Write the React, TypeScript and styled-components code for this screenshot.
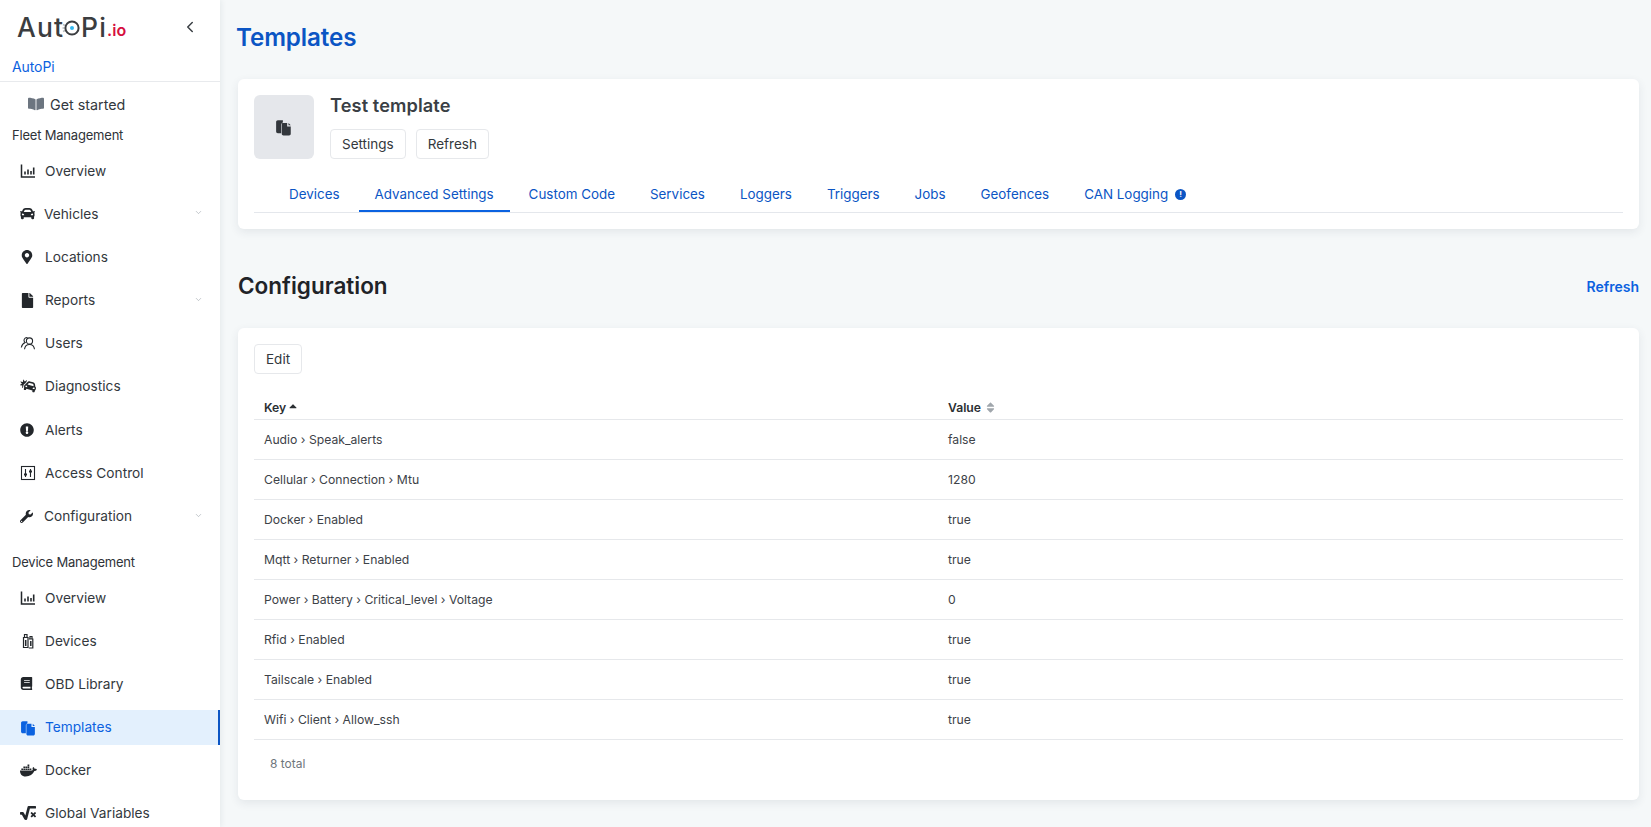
import React from "react";
import styled, { createGlobalStyle } from "styled-components";
import { ChevronLeft, ChevronDown } from "lucide-react";
import {
  FaBookOpen, FaCar, FaMapMarkerAlt, FaFile, FaCarCrash, FaExclamationCircle,
  FaWrench, FaBook, FaDocker, FaSquareRootAlt, FaCaretUp, FaSort,
} from "react-icons/fa";

const Global = createGlobalStyle`
  html, body { margin: 0; padding: 0; height: 100%; overflow: hidden; }
  body { font-family: Inter, "Liberation Sans", sans-serif; background: #f5f8f9; color: #23272b; }
  * { box-sizing: border-box; }
`;

const Shell = styled.div`display: flex; height: 827px; overflow: hidden;`;
const Sidebar = styled.aside`
  width: 220px; flex: none; height: 827px; overflow: hidden; background: #fff;
  box-shadow: 1px 0 6px rgba(30, 50, 70, .08); position: relative; z-index: 1;
`;
const LogoRow = styled.div`height: 54px; display: flex; align-items: center; justify-content: space-between; padding: 0 21px 0 17px;`;
const Logo = styled.div`
  display: flex; align-items: center; font-family: Inter, sans-serif; font-size: 26.5px; font-weight: 500;
  color: #3b3d40; letter-spacing: 1.1px; line-height: 30px; margin-top: -1px;
`;
const LogoSuffix = styled.span`color: #d6103f; font-size: 16px; letter-spacing: .1px; margin: 7px 0 0 0; font-weight: 600;`;
const Collapse = styled.span`display: flex; color: #3a3f44;`;
const OrgName = styled.div`
  height: 28px; padding: 0 12px; border-bottom: 1px solid #e8eaed; color: #0b62e0; font-size: 14px;
  line-height: 26px; letter-spacing: -.1px;
`;
const GetStarted = styled.div`
  height: 34px; margin-top: 5px; display: flex; align-items: center; padding-left: 28px; gap: 6px;
  font-size: 14.3px; color: #33383d; svg { color: #6c7580; }
`;
const GroupLabel = styled.div<{ $top: number; $bottom: number }>`
  height: 20px; padding-left: 12px; font-size: 13px; line-height: 20px; color: #2f3338; letter-spacing: -.2px;
  margin-top: ${p => p.$top}px; margin-bottom: ${p => p.$bottom}px;
`;
const Item = styled.div<{ $active?: boolean }>`
  height: 35px; margin-bottom: 8.2px; display: flex; align-items: center; padding-left: 20px; position: relative;
  font-size: 13.7px;
  color: ${p => (p.$active ? "#0b62e0" : "#33383d")};
  background: ${p => (p.$active ? "#e3f0fd" : "transparent")};
  border-right: ${p => (p.$active ? "2px solid #0b55c4" : "none")};
`;
const ItemIcon = styled.span<{ $expand?: boolean }>`
  width: ${p => (p.$expand ? 24 : 25)}px; flex: none; display: flex; align-items: center;
  color: #23272b;
  ${Item}[data-active="true"] & { color: #0b62e0; }
`;
const Caret = styled.span`position: absolute; right: 17px; top: 12px; color: #9aa1a8; display: flex;`;

const Main = styled.main`flex: 1; min-width: 0; padding: 23px 12px 0 18px;`;
const PageTitle = styled.h1`
  margin: 0 0 26px -2px; font-size: 24.2px; line-height: 30px; font-weight: 600; color: #0b55c4; letter-spacing: -.1px;
`;
const Card = styled.section`
  background: #fff; border-radius: 6px; padding: 16px; box-shadow: 0 3px 10px rgba(40, 60, 80, .09);
`;
const Head = styled.div`display: flex; gap: 16px;`;
const Avatar = styled.div`
  width: 60px; height: 64px; border-radius: 6px; background: #e5e7eb; display: flex; align-items: center;
  justify-content: center; color: #33373c;
`;
const HeadBody = styled.div`display: flex; flex-direction: column;`;
const Name = styled.div`font-size: 18.2px; line-height: 22px; font-weight: 600; color: #3a3f45; margin: -1px 0 13px; letter-spacing: .1px;`;
const Buttons = styled.div`display: flex; gap: 10px;`;
const Button = styled.button`
  height: 30px; padding: 0 11px; background: #fff; border: 1px solid #e6e8eb; border-radius: 4px;
  font: 400 13.5px Inter, sans-serif; color: #33383d;
`;
const Tabs = styled.div`display: flex; gap: 3px; margin-top: 12px; padding-left: 19px; border-bottom: 1px solid #e4e7ec;`;
const Tab = styled.div<{ $active?: boolean }>`
  height: 41px; padding: 13px 16px 0; font-size: 13.4px; line-height: 20px; color: #0b55c4; display: flex; gap: 7px;
  border-bottom: 2px solid ${p => (p.$active ? "#0b62e0" : "transparent")};
`;
const InfoDot = styled.span`
  width: 11px; height: 11px; margin-top: 4.5px; border-radius: 50%; background: #0b55c4; color: #fff; font-size: 8px;
  line-height: 11px; text-align: center; font-weight: 700;
`;
const SectionHead = styled.div`display: flex; justify-content: space-between; align-items: center; margin: 42px 0 27px;`;
const SectionTitle = styled.h2`margin: 0; font-size: 22.5px; line-height: 30px; font-weight: 600; color: #1f2328;`;
const TextLink = styled.span`font-size: 14px; font-weight: 600; color: #0b62e0;`;
const Table = styled.table`width: 100%; margin-top: 20px; border-collapse: collapse; table-layout: fixed;`;
const KeyCol = styled.col`width: 684px;`;
const Th = styled.th`
  height: 25px; padding: 3px 10px 0; text-align: left; font-size: 12.2px; font-weight: 600; color: #2b2f33;
  border-bottom: 1px solid #e6e8eb;
`;
const SortMark = styled.span<{ $muted?: boolean }>`
  display: inline-flex; vertical-align: middle; margin: ${p => (p.$muted ? "-2px 0 0 3px" : "-5px 0 0 1px")};
  color: ${p => (p.$muted ? "#a0a6ac" : "#2b2f33")};
`;
const Td = styled.td`height: 40px; padding: 0 10px; font-size: 12.2px; color: #3d4248; border-bottom: 1px solid #e6e8eb;`;
const Total = styled.div`padding: 14px 0 16px 16px; height: 44px; font-size: 12px; line-height: 20px; color: #6f767d;`;

const S = { width: 16, height: 16, viewBox: "0 0 16 16" };
const ChartIcon = () => (
  <svg {...S} fill="none" stroke="currentColor">
    <path d="M1.5 1.5v12.5h13.5" strokeWidth="1.5" />
    <path d="M5 8.5v3M8 6.5v5M11 8v3.5M13.7 4.5v7" strokeWidth="1.6" />
  </svg>
);
const UsersIcon = () => (
  <svg {...S} fill="none" stroke="currentColor" strokeWidth="1.1">
    <circle cx="9.5" cy="6" r="3.1" />
    <path d="M4.5 14.2c.4-3 2.2-4.7 5-4.7s4.6 1.700 5 4.700" />
    <path d="M7.500 2.500A3 3 0 0 0 4 5.300c0 1 .5 1.800 1.200 2.300C3.300 8.300 1.800 9.900 1.300 12.500" />
  </svg>
);
const AccessIcon = () => (
  <svg {...S} fill="none" stroke="currentColor">
    <rect x="1.500" y="1.500" width="13" height="13" strokeWidth="1.100" />
    <path d="M5.500 4v8M10.500 4v8" strokeWidth="1.100" />
    <path d="M4 9.500h3M9 6.500h3" strokeWidth="1.800" />
  </svg>
);
const DevicesIcon = () => (
  <svg {...S} fill="none" stroke="currentColor" strokeWidth="1.200">
    <path d="M3.500 4.500h4.500v10H3.500zM4.500 4.500V1.500h2.500v3" />
    <path d="M8.800 6h4v9h-4M10 6V3.500h2V6" />
    <path d="M5.700 7v6M10.800 8v5" strokeWidth="1.500" />
  </svg>
);
const TemplatesIcon = ({ size = 16 }: { size?: number }) => (
  <svg width={size} height={size} viewBox="0 0 16 16" fill="currentColor">
    <path d="M1 3.500C1 2.700 1.700 2 2.500 2H7v1.800L5.500 5.300v8.200H2.500C1.700 13.500 1 12.800 1 12z" />
    <path d="M7 4.500h3.800v3h3.200v6.500c0 .8-.7 1.500-1.500 1.500H7.500C6.700 15.500 6 14.800 6 14V5.500C6 4.900 6.400 4.500 7 4.500z" />
    <path d="M12 4.500l2 2h-2z" />
  </svg>
);

const LogoO = () => (
  <svg width="20" height="20" viewBox="0 0 20 20" style={{ margin: "2px 0 0 -3px" }}>
    <path d="M2 6.500l2 1M1.500 10h2M2 13.500l2-1" stroke="#b9bcbf" strokeWidth="1.500" />
    <circle cx="11" cy="10" r="6.600" fill="none" stroke="#3b3d40" strokeWidth="2" />
    <circle cx="11" cy="10" r="2" fill="#35b8f0" />
  </svg>
);

type NavEntry = { label: string; icon: React.ReactNode; expand?: boolean; caret?: boolean; active?: boolean };
const fleet: NavEntry[] = [
  { label: "Overview", icon: <ChartIcon /> },
  { label: "Vehicles", icon: <FaCar size={15} />, expand: true, caret: true },
  { label: "Locations", icon: <FaMapMarkerAlt size={14} /> },
  { label: "Reports", icon: <FaFile size={15} />, caret: true },
  { label: "Users", icon: <UsersIcon /> },
  { label: "Diagnostics", icon: <FaCarCrash size={16} /> },
  { label: "Alerts", icon: <FaExclamationCircle size={14} /> },
  { label: "Access Control", icon: <AccessIcon /> },
  { label: "Configuration", icon: <FaWrench size={13} />, expand: true, caret: true },
];
const device: NavEntry[] = [
  { label: "Overview", icon: <ChartIcon /> },
  { label: "Devices", icon: <DevicesIcon /> },
  { label: "OBD Library", icon: <FaBook size={13} /> },
  { label: "Templates", icon: <TemplatesIcon size={17} />, active: true },
  { label: "Docker", icon: <FaDocker size={17} /> },
  { label: "Global Variables", icon: <FaSquareRootAlt size={16} /> },
];

const NavItem = ({ label, icon, expand, caret, active }: NavEntry) => (
  <Item $active={active} data-active={active ? "true" : "false"}>
    <ItemIcon $expand={expand}>{icon}</ItemIcon>
    {label}
    {caret && <Caret><ChevronDown size={9} strokeWidth={1.5} /></Caret>}
  </Item>
);

const tabs = ["Devices", "Advanced Settings", "Custom Code", "Services", "Loggers", "Triggers", "Jobs", "Geofences"];
const rows: [string, string][] = [
  ["Audio › Speak_alerts", "false"],
  ["Cellular › Connection › Mtu", "1280"],
  ["Docker › Enabled", "true"],
  ["Mqtt › Returner › Enabled", "true"],
  ["Power › Battery › Critical_level › Voltage", "0"],
  ["Rfid › Enabled", "true"],
  ["Tailscale › Enabled", "true"],
  ["Wifi › Client › Allow_ssh", "true"],
];

export default function App() {
  return (
    <>
      <Global />
      <Shell>
        <Sidebar>
          <LogoRow>
            <Logo>Aut<LogoO />Pi<LogoSuffix>.io</LogoSuffix></Logo>
            <Collapse><ChevronLeft size={18} strokeWidth={2} /></Collapse>
          </LogoRow>
          <OrgName>AutoPi</OrgName>
          <GetStarted><FaBookOpen size={16} />Get started</GetStarted>
          <GroupLabel $top={3.5} $bottom={8.5}>Fleet Management</GroupLabel>
          {fleet.map(e => <NavItem key={e.label} {...e} />)}
          <GroupLabel $top={18.5} $bottom={8}>Device Management</GroupLabel>
          {device.map(e => <NavItem key={e.label} {...e} />)}
        </Sidebar>
        <Main>
          <PageTitle>Templates</PageTitle>
          <Card>
            <Head>
              <Avatar><TemplatesIcon size={18} /></Avatar>
              <HeadBody>
                <Name>Test template</Name>
                <Buttons>
                  <Button>Settings</Button>
                  <Button>Refresh</Button>
                </Buttons>
              </HeadBody>
            </Head>
            <Tabs>
              {tabs.map(t => <Tab key={t} $active={t === "Advanced Settings"}>{t}</Tab>)}
              <Tab>CAN Logging<InfoDot>!</InfoDot></Tab>
            </Tabs>
          </Card>
          <SectionHead>
            <SectionTitle>Configuration</SectionTitle>
            <TextLink>Refresh</TextLink>
          </SectionHead>
          <Card>
            <Button>Edit</Button>
            <Table>
              <colgroup><KeyCol /><col /></colgroup>
              <thead>
                <tr>
                  <Th>Key<SortMark><FaCaretUp size={12} /></SortMark></Th>
                  <Th>Value<SortMark $muted><FaSort size={13} /></SortMark></Th>
                </tr>
              </thead>
              <tbody>
                {rows.map(([k, v]) => (
                  <tr key={k}><Td>{k}</Td><Td>{v}</Td></tr>
                ))}
              </tbody>
            </Table>
            <Total>8 total</Total>
          </Card>
        </Main>
      </Shell>
    </>
  );
}
